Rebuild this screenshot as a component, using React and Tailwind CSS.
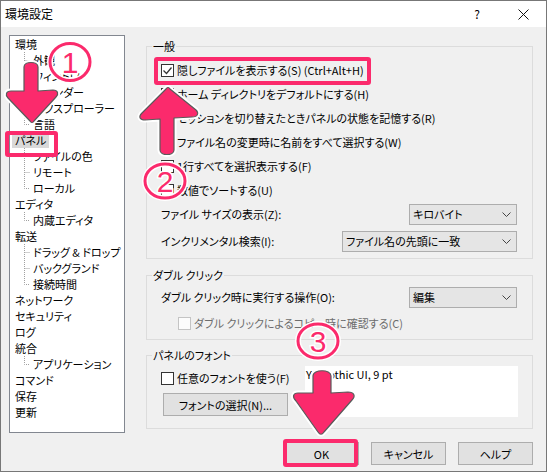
import React from "react";

const PINK = "#fb2a6c";

const tree = [
  { label: "環境", children: ["外観", "ウィンドウ", "コマンダー", "エクスプローラー", "言語"] },
  { label: "パネル", selected: true, children: ["ファイルの色", "リモート", "ローカル"] },
  { label: "エディタ", children: ["内蔵エディタ"] },
  { label: "転送", children: ["ドラッグ & ドロップ", "バックグランド", "接続時間"] },
  { label: "ネットワーク" },
  { label: "セキュリティ" },
  { label: "ログ" },
  { label: "統合", children: ["アプリケーション"] },
  { label: "コマンド" },
  { label: "保存" },
  { label: "更新" },
];

function Branch({ last }) {
  return (
    <svg width="18" height="16" className="shrink-0">
      <path
        d={last ? "M12.5 0V8.5H18" : "M12.5 0V16M12.5 8.5H18"}
        stroke="#a0a0a0"
        strokeDasharray="1 1"
        fill="none"
      />
    </svg>
  );
}

function Tree() {
  return (
    <div className="w-[116px] h-[398px] shrink-0 border border-[#828790] bg-white">
      {tree.map((node) => (
        <div key={node.label}>
          <div className="h-[16px] flex items-center pl-[2px]">
            <span className={`px-[3px] leading-[15px] ${node.selected ? "bg-[#d9d9d9]" : ""}`}>
              {node.label}
            </span>
          </div>
          {(node.children || []).map((c, i) => (
            <div key={c} className="h-[16px] flex items-center pl-[2px]">
              <Branch last={i === node.children.length - 1} />
              <span className="px-[3px] leading-[15px] whitespace-nowrap">{c}</span>
            </div>
          ))}
        </div>
      ))}
    </div>
  );
}

function Check({ checked, disabled, children, className = "" }) {
  return (
    <div className={`flex items-center h-[24px] gap-[3px] whitespace-nowrap ${className}`}>
      <span
        className={`w-[13px] h-[13px] shrink-0 border flex items-center justify-center ${
          disabled ? "border-[#c4c4c4] bg-[#fcfcfc]" : "border-[#333333] bg-white"
        }`}
      >
        {checked && (
          <svg width="11" height="11">
            <path d="M1.5 5.5L4.5 8.5L9.5 2.5" stroke="#333" strokeWidth="1.3" fill="none" />
          </svg>
        )}
      </span>
      <span className={disabled ? "text-[#6d6d6d]" : ""}>{children}</span>
    </div>
  );
}

function Combo({ value, className = "" }) {
  return (
    <div className={`h-[21px] border border-[#adadad] bg-[#e5e5e5] flex items-center pl-[3px] pr-[5px] ${className}`}>
      <span>{value}</span>
      <svg className="ml-auto" width="9" height="5">
        <path d="M0.5 0.5L4.5 4.5L8.5 0.5" stroke="#444" fill="none" />
      </svg>
    </div>
  );
}

function Group({ title, className = "", children }) {
  return (
    <fieldset className={`border border-[#dcdcdc] px-[5px] ${className}`}>
      <legend className="px-[1px] leading-[16px]">{title}</legend>
      {children}
    </fieldset>
  );
}

function Button({ children, className = "" }) {
  return (
    <div className={`h-[23px] border border-[#adadad] bg-[#e1e1e1] flex items-center justify-center ${className}`}>
      {children}
    </div>
  );
}

function Annotations() {
  return (
    <svg className="absolute inset-0 pointer-events-none" width="547" height="472">
      {/* boxes */}
      <g fill="none" stroke={PINK} strokeWidth="4">
        <rect x="155" y="58" width="213" height="24" rx="1" />
        <rect x="6" y="132" width="49" height="22" rx="1" />
        <rect x="284" y="440" width="71" height="24" rx="1" />
      </g>

      {/* arrows */}
      {[
        "M23,66 C23,60 37,60 37,66 L37,90 L52,89 C57,89 58,93 55,96 L33,120 C32,122 30,122 29,120 L7,97 C4,94 5,90 10,90 L23,90 Z",
        "M159,149 C159,155 173,155 173,149 L173,117 L191,116 C197,116 198,112 195,109 L169,88 C168,86 166,86 165,88 L141,112 C137,116 139,119 144,119 L159,118 Z",
        "M312,375 C312,368 330,368 330,375 L330,392 L347,391 C353,391 355,395 351,399 L323,431 C321,434 319,434 317,431 L295,400 C291,396 292,392 297,392 L312,392 Z",
      ].map((d) => (
        <g key={d}>
          <path d={d} fill="none" stroke="white" strokeWidth="5" strokeLinejoin="round" />
          <path d={d} fill={PINK} stroke="#5a5a5a" strokeWidth="1.2" strokeLinejoin="round" />
        </g>
      ))}

      {/* numbered circles */}
      {[
        { cx: 69, cy: 61, rx: 20, ry: 18.5, n: "1", ty: 72 },
        { cx: 164, cy: 180, rx: 20, ry: 17, n: "2", ty: 191 },
        { cx: 317, cy: 340, rx: 20, ry: 17, n: "3", ty: 351 },
      ].map((c) => (
        <g key={c.n}>
          <ellipse cx={c.cx} cy={c.cy} rx={c.rx} ry={c.ry} fill="none" stroke="white" strokeWidth="6" />
          <ellipse cx={c.cx} cy={c.cy} rx={c.rx} ry={c.ry} fill="none" stroke={PINK} strokeWidth="3" />
          <text
            x={c.cx}
            y={c.ty}
            textAnchor="middle"
            fontFamily="Liberation Sans, sans-serif"
            fontSize="30"
            fill={PINK}
            stroke="white"
            strokeWidth="3"
            paintOrder="stroke"
          >
            {c.n}
          </text>
        </g>
      ))}
    </svg>
  );
}

export default function App() {
  return (
    <div className="relative w-[547px] h-[472px] flex flex-col overflow-hidden border border-[#777777] bg-[#f0f0f0] text-[11px] leading-[16px] text-black [font-family:'Noto_Sans_CJK_JP',sans-serif] [font-feature-settings:'palt']">
      {/* Title bar */}
      <div className="h-[26px] shrink-0 bg-white flex items-center pl-[4px] text-[12px]">
        <span>環境設定</span>
        <span className="ml-auto w-[46px] text-center">?</span>
        <span className="w-[46px] flex justify-center">
          <svg width="11" height="11">
            <path d="M0.5 0.5L10.5 10.5M10.5 0.5L0.5 10.5" stroke="#111" fill="none" />
          </svg>
        </span>
      </div>

      <div className="flex flex-1 pl-[8px] pt-[8px] pr-[13px]">
        <Tree />

        <div className="ml-[21px] flex-1 flex flex-col">
          {/* 一般 */}
          <Group title="一般" className="mt-[3px] pb-[5px]">
            <div className="pl-[9px] pr-[10px] pt-[4px]">
              <Check checked>隠しファイルを表示する(S) (Ctrl+Alt+H)</Check>
              <Check>ホーム ディレクトリをデフォルトにする(H)</Check>
              <Check>セッションを切り替えたときパネルの状態を記憶する(R)</Check>
              <Check>ファイル名の変更時に名前をすべて選択する(W)</Check>
              <Check>1行すべてを選択表示する(F)</Check>
              <Check>数値でソートする(U)</Check>
              <div className="h-[24px] flex items-center">
                <span>ファイル サイズの表示(Z):</span>
                <Combo value="キロバイト" className="ml-auto w-[108px]" />
              </div>
              <div className="h-[24px] mt-[3px] flex items-center">
                <span>インクリメンタル検索(I):</span>
                <Combo value="ファイル名の先頭に一致" className="ml-auto w-[175px]" />
              </div>
            </div>
          </Group>

          {/* ダブル クリック */}
          <Group title="ダブル クリック" className="mt-[8px] pb-[4px]">
            <div className="pl-[9px] pr-[10px] pt-[2px]">
              <div className="h-[24px] flex items-center">
                <span>ダブル クリック時に実行する操作(O):</span>
                <Combo value="編集" className="ml-auto w-[108px]" />
              </div>
              <Check disabled className="ml-[17px] mt-[2px]">
                ダブル クリックによるコピー時に確認する(C)
              </Check>
            </div>
          </Group>

          {/* パネルのフォント */}
          <Group title="パネルのフォント" className="mt-[7px] pb-[11px]">
            <div className="pl-[9px] pr-[9px] pt-[3px] flex">
              <div className="flex flex-col">
                <Check>任意のフォントを使う(F)</Check>
                <Button className="mt-[3px] ml-[2px] w-[125px]">フォントの選択(N)...</Button>
              </div>
              <div className="ml-auto w-[213px] h-[51px] bg-white px-[1px]">Yu Gothic UI, 9 pt</div>
            </div>
          </Group>

          {/* dialog buttons */}
          <div className="mt-[13px] flex justify-end gap-[12px]">
            <Button className="w-[75px] border-[#0078d7]">OK</Button>
            <Button className="w-[75px]">キャンセル</Button>
            <Button className="w-[75px]">ヘルプ</Button>
          </div>
        </div>
      </div>

      <Annotations />
    </div>
  );
}
